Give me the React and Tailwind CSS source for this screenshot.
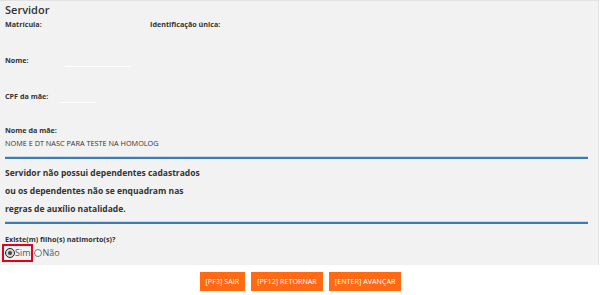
export default function App() {
  return (
    <div className="w-[601px] h-[295px] bg-white font-['Open_Sans',sans-serif] text-[#333]">
      <div className="h-[265px] w-[599px] border-t border-r border-[#e2e2e2] bg-[#f2f2f2] px-[5px] pt-[2px]">
        <div className="text-[11px] font-semibold leading-[14px]">Servidor</div>
        <div className="flex text-[7.2px] font-bold leading-[10px] mt-[2px]">
          <div className="w-[145px]">Matrícula:</div>
          <div>Identificação única:</div>
        </div>
        <div className="mt-[26px] text-[7.2px] font-bold leading-[10px]">Nome:</div>
        <div className="mt-[1px] ml-[60px] w-[66px] h-[1px] bg-white"></div>
        <div className="mt-[24px] text-[7.2px] font-bold leading-[10px]">CPF da mãe:</div>
        <div className="mt-[1px] ml-[55px] w-[36px] h-[1px] bg-white"></div>
        <div className="mt-[22px] text-[7.2px] font-bold leading-[10px]">Nome da mãe:</div>
        <div className="mt-[3px] text-[7.3px] leading-[10px]">NOME E DT NASC PARA TESTE NA HOMOLOG</div>
        <div className="mt-[9px] w-[583px] h-[2px] bg-[#3d7bb4] shadow-[0_-1px_0_#c6d9ea]"></div>
        <div className="mt-[5px] text-[8.5px] font-bold leading-[18px]">
          Servidor não possui dependentes cadastrados
          <br />
          ou os dependentes não se enquadram nas
          <br />
          regras de auxílio natalidade.
        </div>
        <div className="mt-[4px] w-[583px] h-[2px] bg-[#3d7bb4] shadow-[0_-1px_0_#c6d9ea]"></div>
        <div className="mt-[10px] text-[7.2px] font-bold leading-[10px]">Existe(m) filho(s) natimorto(s)?</div>
        <div className="flex items-center -ml-[3px] text-[9px] leading-[12px] text-[#555]">
          <div className="flex items-center h-[18px] border-2 border-[#e3001b] pl-[1px]">
            <span className="flex items-center justify-center w-[10px] h-[10px] rounded-full border border-[#222] bg-[#d8d8d8]">
              <span className="w-[4px] h-[4px] rounded-full bg-[#444]"></span>
            </span>
            <span>Sim</span>
          </div>
          <span className="ml-[1px] w-[8px] h-[8px] rounded-full border border-[#777] bg-white"></span>
          <span className="ml-[1px]">Não</span>
        </div>
      </div>
      <div className="flex justify-center gap-[6px] mt-[7px]">
        <button className="h-[19px] px-[6px] bg-[#ff6a13] text-white text-[7.2px] leading-[19px]">[PF3] SAIR</button>
        <button className="h-[19px] px-[6px] bg-[#ff6a13] text-white text-[7.2px] leading-[19px]">[PF12] RETORNAR</button>
        <button className="h-[19px] px-[6px] bg-[#ff6a13] text-white text-[7.2px] leading-[19px]">[ENTER] AVANÇAR</button>
      </div>
    </div>
  );
}
